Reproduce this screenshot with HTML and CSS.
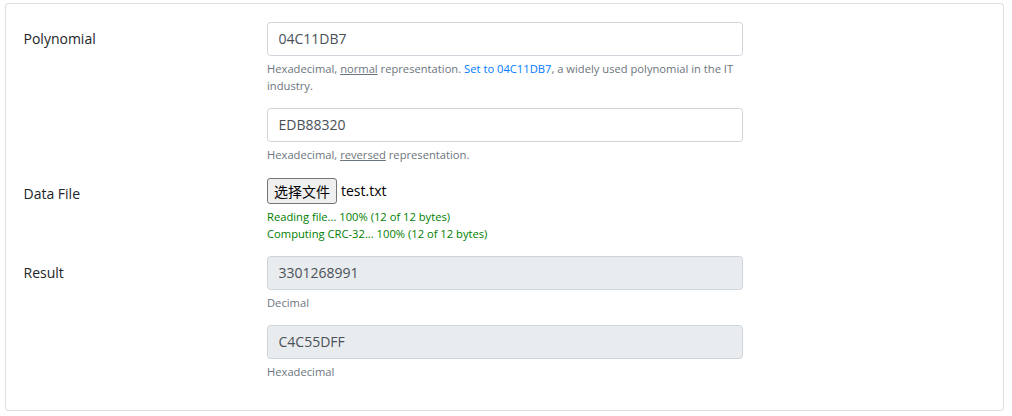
FILE: index.html
```html
<!DOCTYPE html>
<html lang="en">
<head>
<meta charset="utf-8">
<title>CRC-32</title>
<link rel="stylesheet" href="styles.css">
</head>
<body>
<div class="page">
  <div class="card">
    <div class="card-body">
      <div class="form-row">
        <label class="col-label">Polynomial</label>
        <div class="col-field">
          <input class="form-control" type="text" value="04C11DB7">
          <small class="form-text">Hexadecimal, <span class="u">normal</span> representation. <a class="link" href="#">Set to 04C11DB7</a>, a widely used polynomial in the IT industry.</small>
        </div>
      </div>
      <div class="form-row">
        <div class="col-label"></div>
        <div class="col-field">
          <input class="form-control" type="text" value="EDB88320">
          <small class="form-text">Hexadecimal, <span class="u">reversed</span> representation.</small>
        </div>
      </div>
      <div class="form-row">
        <label class="col-label">Data File</label>
        <div class="col-field">
          <div class="file-control">
            <button class="file-btn" type="button">选择文件</button>
            <span class="file-name">test.txt</span>
          </div>
          <div class="status">
            <div>Reading file... 100% (12 of 12 bytes)</div>
            <div>Computing CRC-32... 100% (12 of 12 bytes)</div>
          </div>
        </div>
      </div>
      <div class="form-row">
        <label class="col-label">Result</label>
        <div class="col-field">
          <input class="form-control" type="text" value="3301268991" readonly>
          <small class="form-text">Decimal</small>
        </div>
      </div>
      <div class="form-row">
        <div class="col-label"></div>
        <div class="col-field">
          <input class="form-control" type="text" value="C4C55DFF" readonly>
          <small class="form-text">Hexadecimal</small>
        </div>
      </div>
    </div>
  </div>
</div>
</body>
</html>
```

FILE: styles.css
```css
html, body {
  margin: 0;
  padding: 0;
  background: #fff;
}
body {
  font-family: "Open Sans", "Noto Sans", "Noto Sans CJK SC", sans-serif;
  font-size: 14px;
  line-height: 1.5;
  color: #212529;
}
.page {
  padding: 3px 8px 0 5px;
}
.card {
  border: 1px solid rgba(0, 0, 0, 0.125);
  border-radius: 4px;
  background: #fff;
}
.card-body {
  padding: 17.5px 17.5px 16.5px 17.5px;
}
.form-row {
  display: grid;
  grid-template-columns: 243.5px 476px;
  margin-bottom: 14px;
}
.col-label {
  padding-top: 6.5px;
  padding-bottom: 6.5px;
  line-height: 1.5;
}
.col-field {
  min-width: 0;
}
.form-control {
  display: block;
  box-sizing: border-box;
  width: 100%;
  height: 34px;
  padding: 5.25px 10.5px;
  font-family: inherit;
  font-size: 14px;
  line-height: 1.5;
  color: #495057;
  background: #fff;
  border: 1px solid #ced4da;
  border-radius: 3.5px;
  margin: 0;
  outline: none;
}
.form-control[readonly] {
  background: #e9ecef;
}
.form-text {
  display: block;
  margin-top: 4px;
  font-size: 11.2px;
  line-height: 17px;
  color: #6c757d;
}
.u {
  text-decoration: underline;
  text-decoration-color: #6c757d;
}
.link {
  color: #007bff;
  text-decoration: none;
}
.file-control {
  display: flex;
  align-items: center;
  gap: 4px;
  height: 28px;
}
.file-btn {
  font-family: "Noto Sans CJK SC", sans-serif;
  font-size: 14px;
  line-height: 1;
  height: 26px;
  padding: 1px 6px;
  color: #000;
  background: #efefef;
  border: 1px solid #767676;
  border-radius: 3px;
  margin: 0;
}
.file-name {
  font-size: 14px;
  color: #000;
}
.status {
  margin-top: 3px;
  font-size: 11.2px;
  line-height: 17px;
  color: #008000;
}
```
